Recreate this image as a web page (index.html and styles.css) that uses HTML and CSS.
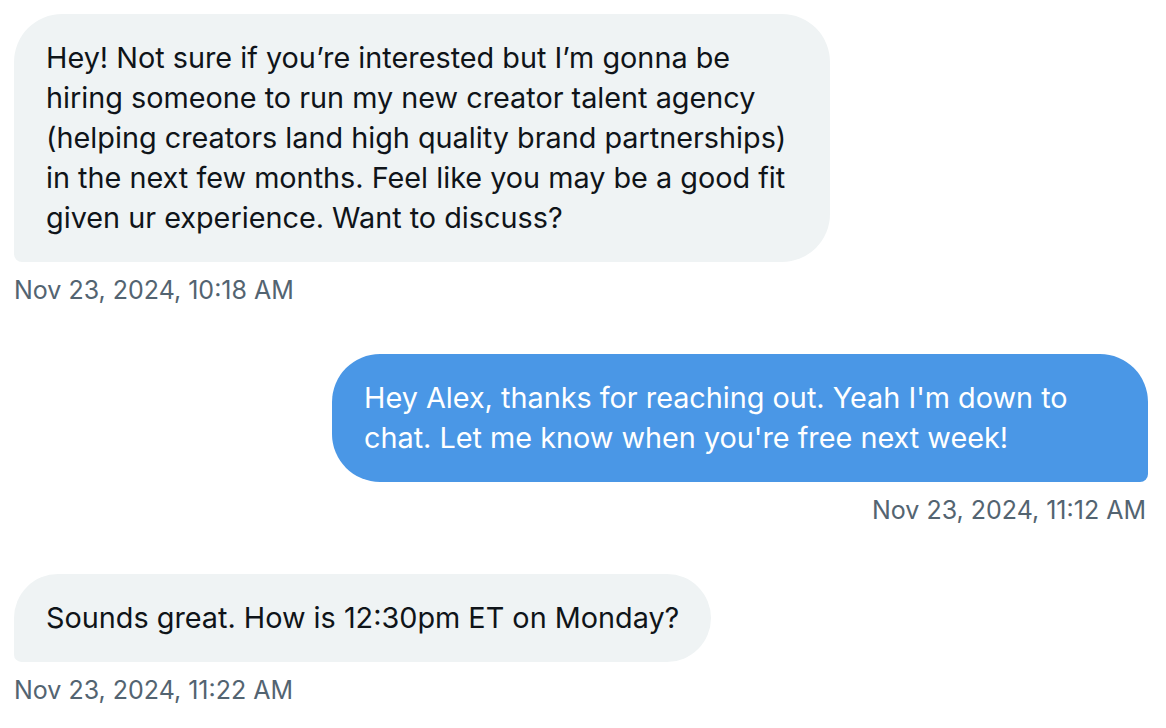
FILE: index.html
```html
<!DOCTYPE html>
<html>
<head>
<meta charset="utf-8">
<link rel="stylesheet" href="styles.css">
</head>
<body>
<div class="thread">
  <div class="msg received">
    <div class="bubble">Hey! Not sure if you’re interested but I’m gonna be hiring someone to run my new creator talent agency (helping creators land high quality brand partnerships) in the next few months. Feel like you may be a good fit given ur experience. Want to discuss?</div>
    <div class="time">Nov 23, 2024, 10:18 AM</div>
  </div>
  <div class="msg sent">
    <div class="bubble">Hey Alex, thanks for reaching out. Yeah I'm down to chat. Let me know when you're free next week!</div>
    <div class="time">Nov 23, 2024, 11:12 AM</div>
  </div>
  <div class="msg received">
    <div class="bubble">Sounds great. How is 12:30pm ET on Monday?</div>
    <div class="time">Nov 23, 2024, 11:22 AM</div>
  </div>
</div>
</body>
</html>
```
FILE: styles.css
```css
html, body {
  margin: 0;
  padding: 0;
  background: #ffffff;
}
body {
  font-family: Inter, "Noto Sans", "Liberation Sans", sans-serif;
  color: #0f1419;
}
.thread {
  display: flex;
  flex-direction: column;
  gap: 50px;
  padding: 14px 18px 0 14px;
}
.msg {
  display: flex;
  flex-direction: column;
  gap: 14px;
}
.msg.received { align-items: flex-start; }
.msg.sent { align-items: flex-end; }
.bubble {
  max-width: 816px;
  box-sizing: border-box;
  padding: 24px 32px;
  font-size: 28.8px;
  line-height: 40px;
}
.received .bubble {
  background: #eff3f4;
  color: #0f1419;
  border-radius: 48px 48px 48px 8px;
}
.sent .bubble {
  background: #4a97e6;
  color: #ffffff;
  border-radius: 48px 48px 8px 48px;
}
.time {
  font-size: 25px;
  line-height: 28px;
  color: #536471;
  margin: 0 2px 0 0;
}
```
